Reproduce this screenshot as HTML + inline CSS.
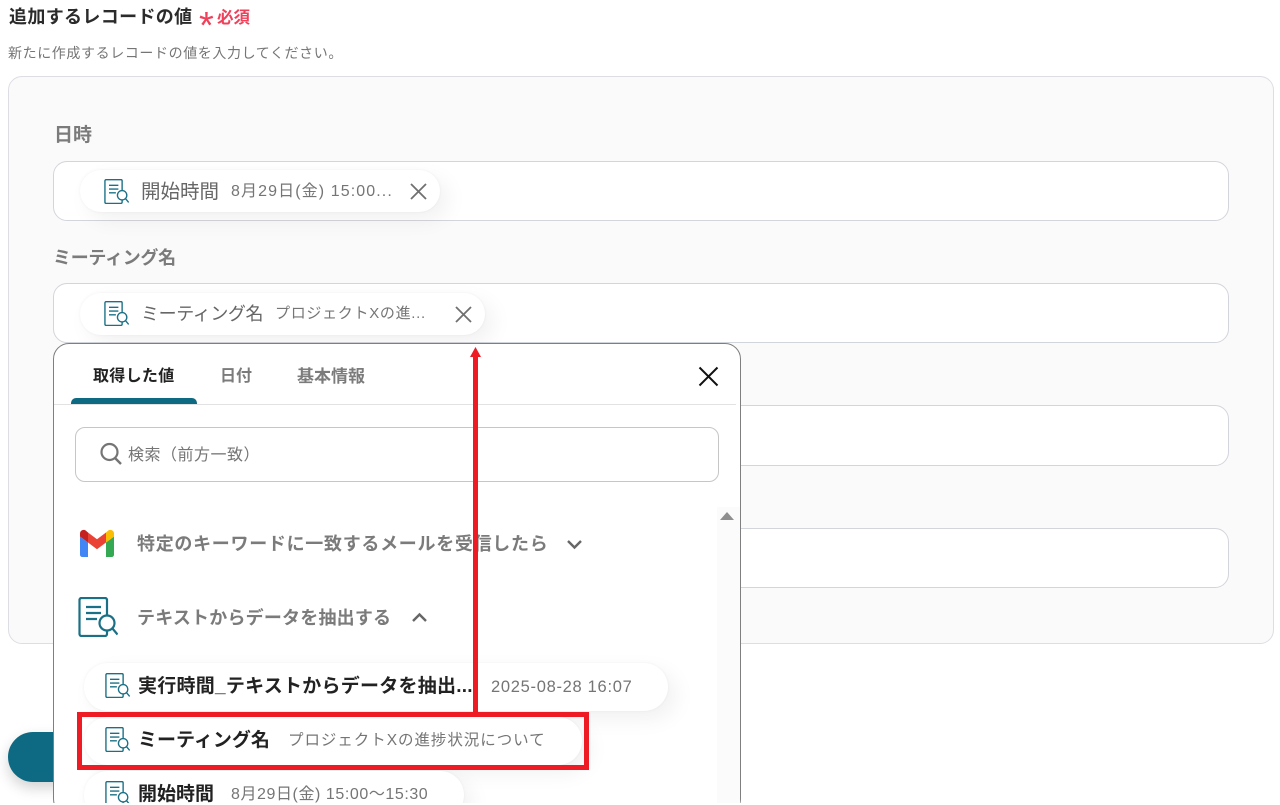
<!DOCTYPE html>
<html lang="ja"><head><meta charset="utf-8"><title>追加するレコードの値</title>
<style>
html,body{margin:0;padding:0;width:1280px;height:805px;overflow:hidden;background:#fff}
body{position:relative;font-family:"Liberation Sans","Noto Sans CJK JP",sans-serif;color:#333}
.a,.t{position:absolute}
.t{white-space:nowrap;line-height:24px;height:24px}
.in{position:absolute;left:53px;width:1174px;height:58px;background:#fff;border:1px solid #d3d5dc;border-radius:14px}
.chip{position:absolute;background:#fff;border-radius:22px;box-shadow:0 0 3px rgba(0,0,0,.05),8px 8px 22px rgba(0,0,0,.06)}
.g{color:#757575}
.x{color:#222;font-weight:700}
svg{position:absolute;overflow:visible}
</style></head><body>
<svg width="0" height="0"><defs>
<symbol id="doc" viewBox="0 0 40 40"><g fill="none" stroke="#1a7086" stroke-width="2.200"><path d="M29 18V3a2 2 0 0 0-2-2H3.500a2 2 0 0 0-2 2v34a2 2 0 0 0 2 2H27a2 2 0 0 0 2-2v-3"/><path d="M8 10h15M8 16h15M8 22h11"/><circle cx="29" cy="26" r="7.500"/><path d="M34.500 31.500l5 6"/></g></symbol>
</defs></svg>

<div class="t x" style="left:9px;top:5px;font-size:18px;letter-spacing:.35px;color:#2b2b2b">追加するレコードの値</div>
<div class="t" style="left:199px;top:14px;font-size:38px;color:#f0405a">*</div>
<div class="t" style="left:217px;top:6px;font-size:16.500px;color:#f0405a;font-weight:700">必須</div>
<div class="t g" style="left:8px;top:41px;font-size:14px;letter-spacing:.6px">新たに作成するレコードの値を入力してください。</div>

<div class="a" style="left:8px;top:76px;width:1264px;height:566px;background:#fafafa;border:1px solid #dddee4;border-radius:14px"></div>

<div class="t" style="left:54px;top:124px;font-size:19px;font-weight:700;color:#7b7b7b">日時</div>
<div class="in" style="top:161px"></div>
<div class="chip" style="left:80px;top:170px;width:360px;height:42px"></div>
<svg style="left:104px;top:179px" width="25" height="25"><use href="#doc"/></svg>
<div class="t" style="left:141px;top:180px;font-size:19.500px;color:#666">開始時間</div>
<div class="t g" style="left:231px;top:180px;font-size:16px;letter-spacing:1.100px">8月29日(金) 15:00...</div>
<svg style="left:410px;top:183px" width="16" height="16" viewBox="0 0 16 16"><path d="M1 1l15 15M16 1L1 16" stroke="#707070" stroke-width="1.800" fill="none"/></svg>

<div class="t" style="left:53px;top:246px;font-size:18px;font-weight:700;letter-spacing:-.3px;color:#7b7b7b">ミーティング名</div>
<div class="in" style="top:283px"></div>
<div class="chip" style="left:80px;top:293px;width:405px;height:42px"></div>
<svg style="left:104px;top:301px" width="25" height="25"><use href="#doc"/></svg>
<div class="t" style="left:141px;top:302px;font-size:18px;letter-spacing:-.4px;color:#666">ミーティング名</div>
<div class="t g" style="left:275px;top:302px;font-size:15px;letter-spacing:.7px">プロジェクトXの進...</div>
<svg style="left:455px;top:306px" width="16" height="16" viewBox="0 0 16 16"><path d="M1 1l15 15M16 1L1 16" stroke="#707070" stroke-width="1.800" fill="none"/></svg>

<div class="in" style="top:405px;height:59px"></div>
<div class="in" style="top:528px"></div>

<div class="a" style="left:8px;top:732px;width:100px;height:50px;border-radius:25px;background:#0e6a82;box-shadow:0 6px 14px rgba(0,0,0,.18)"></div>

<div class="a" style="left:53px;top:343px;width:686px;height:470px;background:#fff;border:1px solid #7f7f7f;border-radius:16px"></div>
<div class="a" style="left:54px;top:404px;width:682px;height:1px;background:#e2e2e2"></div>
<div class="a" style="left:71px;top:398px;width:126px;height:6px;background:#0e6a82;border-radius:5px 5px 0 0"></div>
<div class="t x" style="left:93px;top:365px;font-size:16px;letter-spacing:.3px">取得した値</div>
<div class="t" style="left:220px;top:365px;font-size:16px;font-weight:700;color:#7b7b7b">日付</div>
<div class="t" style="left:297px;top:365px;font-size:17px;font-weight:700;color:#7b7b7b">基本情報</div>
<svg style="left:699px;top:367px" width="19" height="19" viewBox="0 0 19 19"><path d="M.5.5l18 18M18.500.5l-18 18" stroke="#111" stroke-width="2" fill="none"/></svg>

<div class="a" style="left:75px;top:427px;width:642px;height:53px;border:1px solid #c6c6c6;border-radius:10px"></div>
<svg style="left:100px;top:442px" width="22" height="23" viewBox="0 0 22 23"><circle cx="9.500" cy="10" r="8" fill="none" stroke="#757575" stroke-width="2.200"/><path d="M15 16l6 6" stroke="#757575" stroke-width="2.400" fill="none"/></svg>
<div class="t g" style="left:128px;top:444px;font-size:16px;letter-spacing:.5px">検索（前方一致）</div>

<div class="a" style="left:717px;top:507px;width:23px;height:298px;background:#fbfbfb"></div>
<svg style="left:720px;top:512px" width="14" height="8"><path d="M7 0l7 8H0z" fill="#8f8f8f"/></svg>

<svg style="left:80px;top:530px" width="34" height="27" viewBox="0 0 34 27">
<path d="M2.300 27H8V12.500L0 6.500V24.700A2.300 2.300 0 0 0 2.300 27z" fill="#4285f4"/>
<path d="M26 27h5.700a2.300 2.300 0 0 0 2.300-2.300V6.500l-8 6z" fill="#34a853"/>
<path d="M26 2.500v10l8-6V3.500c0-3-3.400-4.700-5.800-2.900z" fill="#fbbc04"/>
<path d="M8 12.500v-10l9 6.800 9-6.800v10l-9 6.800z" fill="#ea4335"/>
<path d="M0 3.500v3l8 6v-10L5.800.6C3.400-1.200 0 .5 0 3.500z" fill="#c5221f"/></svg>
<div class="t" style="left:137px;top:532px;font-size:18px;font-weight:700;color:#7b7b7b;letter-spacing:.7px">特定のキーワードに一致するメールを受信したら</div>
<svg style="left:566px;top:539px" width="17" height="11" viewBox="0 0 17 11"><path d="M2 2l6.500 6.500L15 2" fill="none" stroke="#666" stroke-width="2.400"/></svg>

<svg style="left:78px;top:597px" width="40" height="40"><use href="#doc"/></svg>
<div class="t" style="left:137px;top:606px;font-size:18px;font-weight:700;color:#7b7b7b;letter-spacing:.2px">テキストからデータを抽出する</div>
<svg style="left:411px;top:612px" width="17" height="11" viewBox="0 0 17 11"><path d="M2 9l6.500-6.500L15 9" fill="none" stroke="#666" stroke-width="2.400"/></svg>

<div class="chip" style="left:84px;top:663px;width:584px;height:48px;border-radius:24px"></div>
<svg style="left:105px;top:673px" width="25" height="25"><use href="#doc"/></svg>
<div class="t x" style="left:138px;top:675px;font-size:19px;letter-spacing:.25px">実行時間_テキストからデータを抽出...</div>
<div class="t g" style="left:491px;top:675px;font-size:16.500px;letter-spacing:.7px">2025-08-28 16:07</div>

<div class="chip" style="left:84px;top:717px;width:498px;height:48px;border-radius:24px"></div>
<svg style="left:105px;top:727px" width="25" height="25"><use href="#doc"/></svg>
<div class="t x" style="left:138px;top:729px;font-size:19px">ミーティング名</div>
<div class="t g" style="left:288px;top:729px;font-size:15.500px;letter-spacing:.95px">プロジェクトXの進捗状況について</div>

<div class="chip" style="left:84px;top:771px;width:380px;height:48px;border-radius:24px"></div>
<svg style="left:105px;top:781px" width="25" height="25"><use href="#doc"/></svg>
<div class="t x" style="left:138px;top:783px;font-size:19px">開始時間</div>
<div class="t g" style="left:231px;top:783px;font-size:16px;letter-spacing:.57px">8月29日(金) 15:00～15:30</div>

<div class="a" style="left:0;top:803px;width:1280px;height:2px;background:#fff"></div>

<div class="a" style="left:77px;top:712px;width:502px;height:48px;border:5px solid #ee1b24"></div>
<div class="a" style="left:473px;top:355px;width:5px;height:357px;background:#ee1b24"></div>
<svg style="left:470px;top:347px" width="11" height="10"><path d="M5.500 0L11 10H0z" fill="#ee1b24"/></svg>
</body></html>
